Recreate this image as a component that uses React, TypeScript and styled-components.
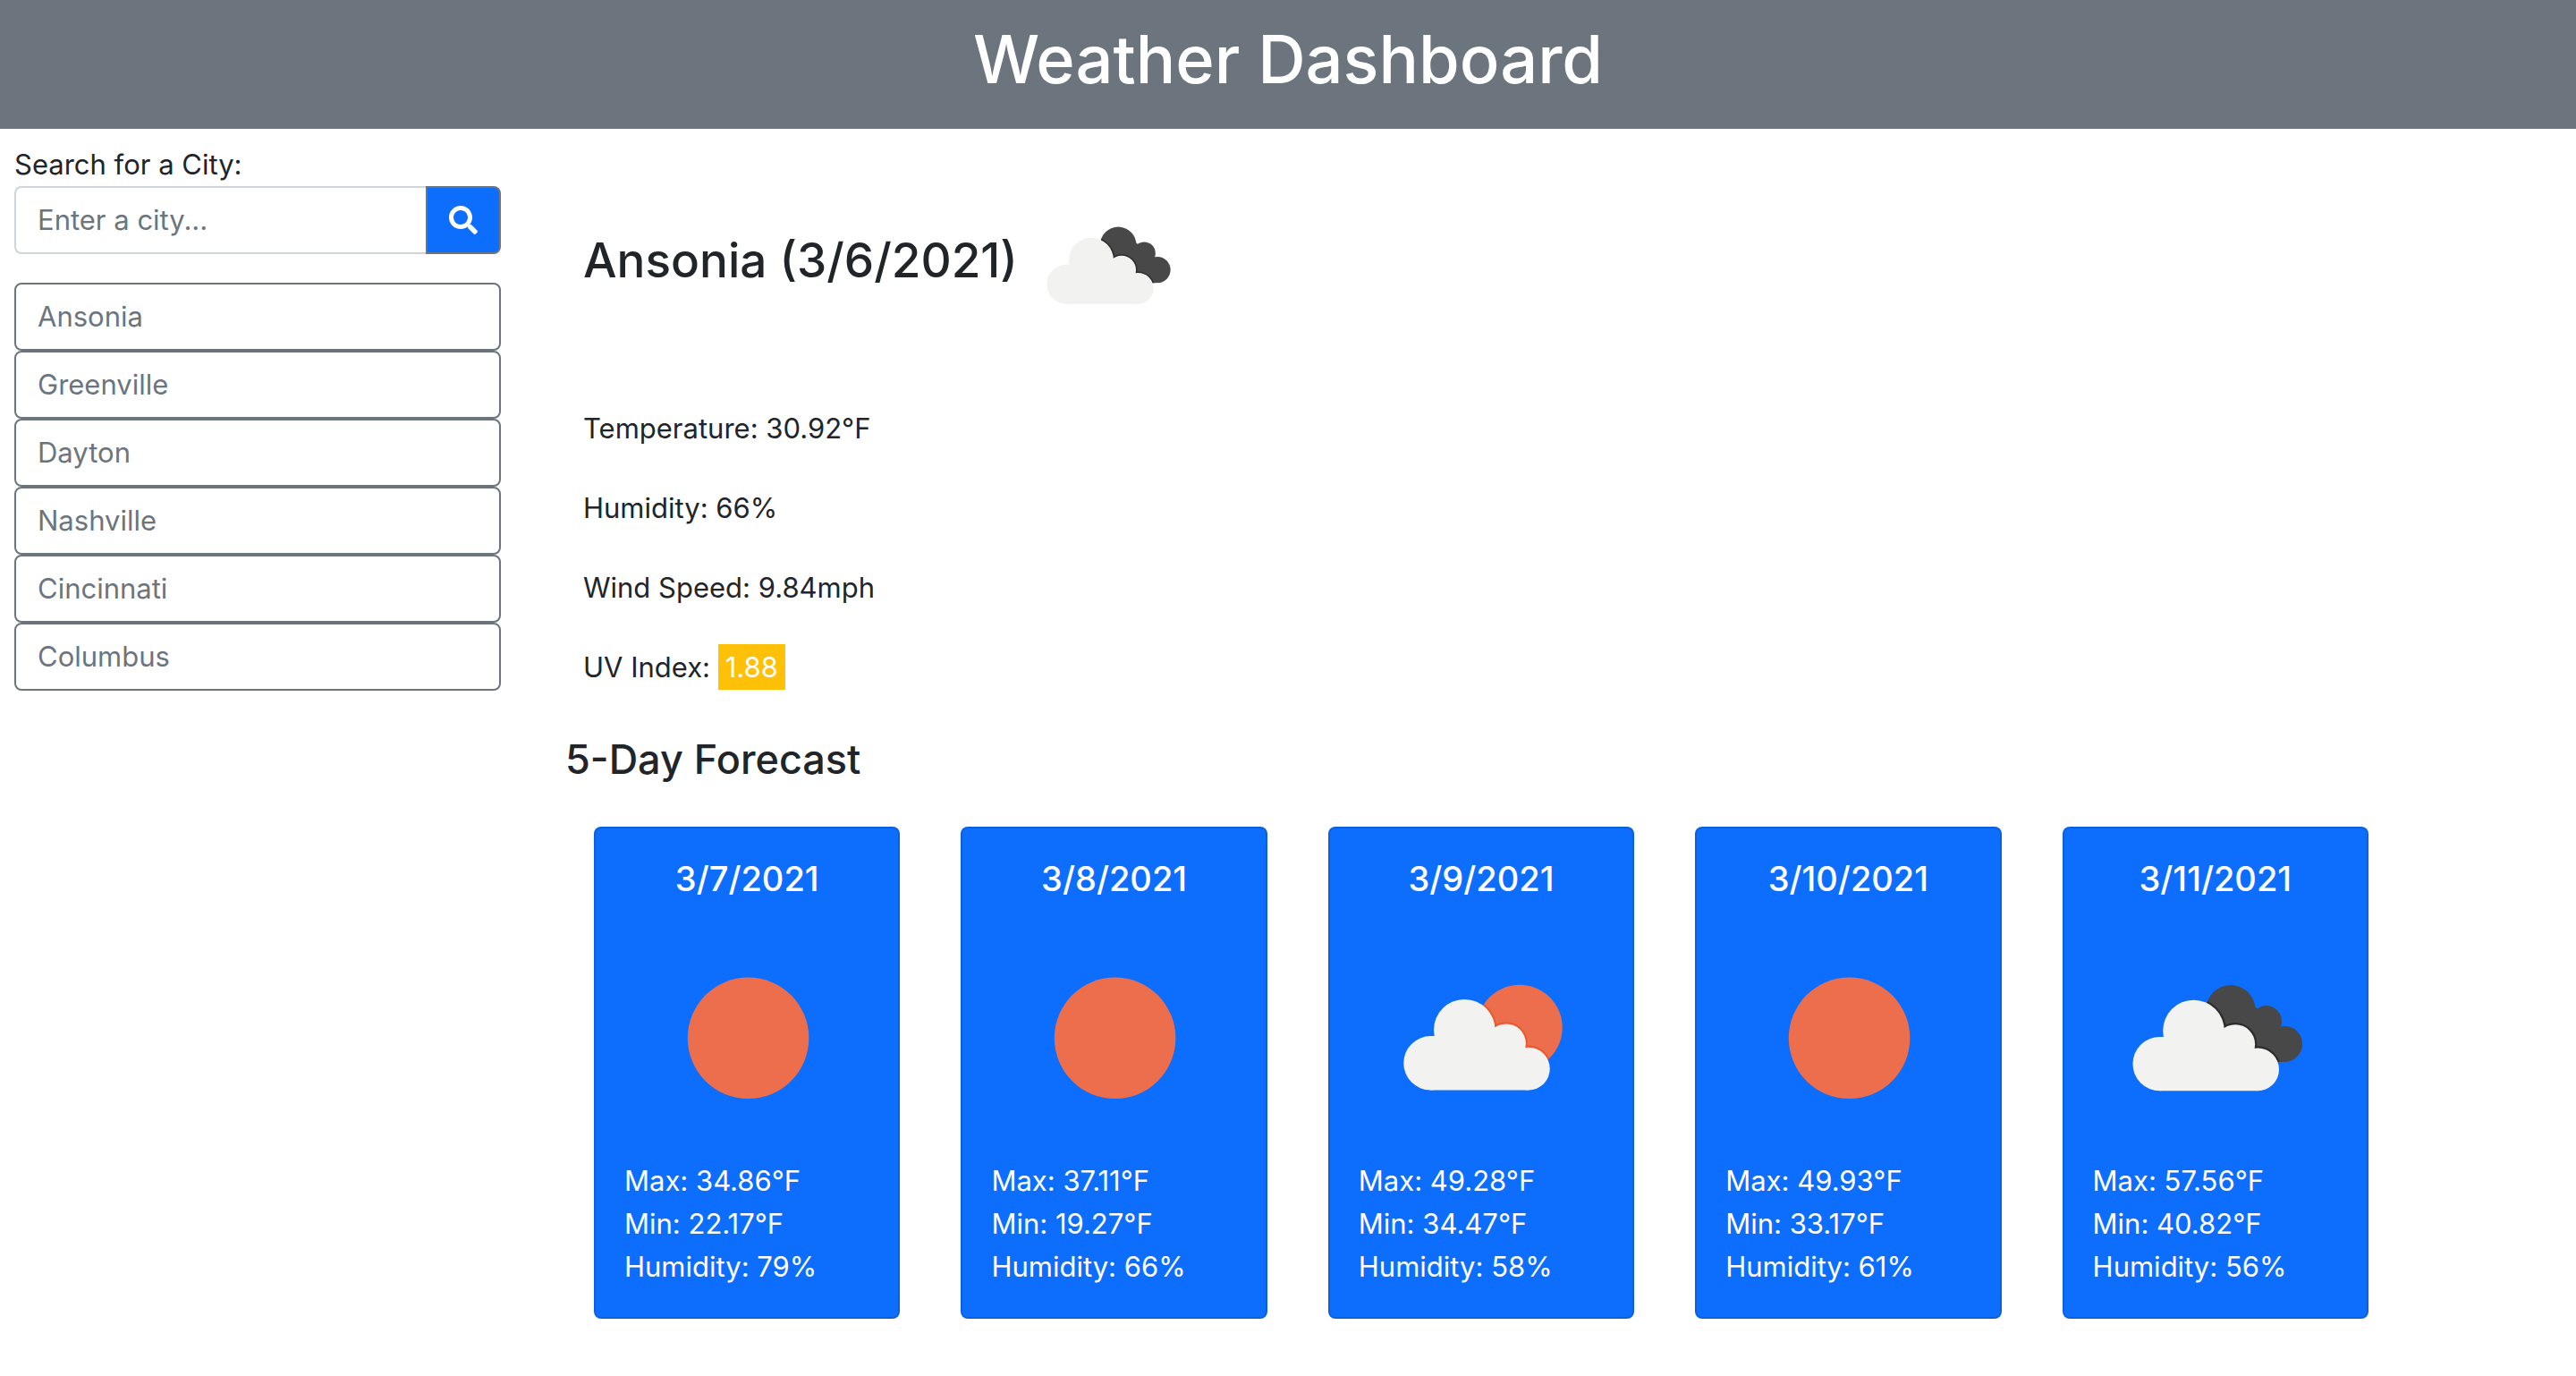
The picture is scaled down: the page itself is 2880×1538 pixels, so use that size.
import React, { useId, useState } from "react";
import styled, { createGlobalStyle } from "styled-components";
import { FaSearch } from "react-icons/fa";

const GlobalStyle = createGlobalStyle`
  *, *::before, *::after { box-sizing: border-box; }
  body {
    margin: 0;
    background: #fff;
    color: #212529;
    font-family: Inter, "Liberation Sans", sans-serif;
    font-size: 31px;
    line-height: 48px;
  }
  h1, h2, h3, h4, p, ul { margin: 0; padding: 0; }
  h1, h2, h3, h4 { font-weight: 500; }
  ul { list-style: none; }
  button, input { font: inherit; margin: 0; }
`;

const Header = styled.header`
  padding: 18px 16px 30px;
  background: #6c757d;
  color: #fff;
  text-align: center;
`;

const Title = styled.h1`
  font-size: 74px;
  line-height: 96px;
`;

const Layout = styled.div`
  display: flex;
  align-items: flex-start;
`;

const Sidebar = styled.aside`
  flex: 0 0 20%;
  min-width: 0;
  padding: 16px;
`;

const SearchForm = styled.form`
  margin-bottom: 32px;
`;

const Label = styled.label`
  display: block;
`;

const InputGroup = styled.div`
  display: flex;
`;

const CityInput = styled.input`
  flex: 1;
  min-width: 0;
  padding: 12px 24px;
  border: 2px solid #ced4da;
  border-right: 0;
  border-radius: 8px 0 0 8px;
  background: #fff;
  color: #212529;
  &::placeholder { color: #6c757d; opacity: 1; }
`;

const SearchButton = styled.button`
  display: flex;
  align-items: center;
  padding: 12px 24px;
  border: 2px solid #6c757d;
  border-radius: 0 8px 8px 0;
  background: #0d6efd;
  color: #fff;
  cursor: pointer;
  svg { width: 32px; height: 32px; }
`;

const CityList = styled.ul`
  display: flex;
  flex-direction: column;
`;

const CityButton = styled.button`
  display: block;
  width: 100%;
  padding: 12px 24px;
  border: 2px solid #6c757d;
  border-radius: 8px;
  background: transparent;
  color: #6c757d;
  text-align: left;
  cursor: pointer;
`;

const Main = styled.main`
  flex: 1;
  min-width: 0;
  padding: 52px 232px 64px 56px;
`;

const Current = styled.section`
  padding: 0 20px;
`;

const CityHeading = styled.h2`
  margin-bottom: 59px;
  font-size: 53px;
  line-height: 67px;
`;

const CurrentIcon = styled.span`
  display: inline-block;
  width: 200px;
  height: 200px;
  vertical-align: middle;
`;

const Readings = styled.ul`
  display: grid;
  gap: 41px;
`;

const UvBadge = styled.span`
  padding: 7px 8px;
  background: #ffc107;
  color: #fff;
`;

const ForecastHeading = styled.h3`
  margin: 50px 0 46px;
  font-size: 45px;
  line-height: 58px;
`;

const ForecastRow = styled.div`
  display: grid;
  grid-template-columns: repeat(5, 1fr);
  gap: 68px;
  padding-left: 32px;
`;

const Card = styled.article`
  padding: 32px;
  border: 2px solid rgba(0, 0, 0, 0.125);
  border-radius: 8px;
  background: #0d6efd;
  color: #fff;
`;

const CardDate = styled.h4`
  margin-bottom: 16px;
  font-size: 38px;
  line-height: 48px;
  text-align: center;
`;

const Picture = styled.svg`
  display: block;
  width: 100%;
  aspect-ratio: 1;
`;

type Sky = "sun" | "sunCloud" | "clouds";

const CloudShape = () => (
  <>
    <circle cx="27.2" cy="60.9" r="11" />
    <circle cx="41" cy="47.4" r="12.5" />
    <circle cx="58" cy="52.9" r="8" />
    <circle cx="67.1" cy="63.2" r="8.7" />
    <path d="M27.2 49.9H53L65.4 54.6L67.1 71.9H27.2z" />
  </>
);

const DarkCloudShape = () => (
  <>
    <circle cx="56.1" cy="38.9" r="10.1" />
    <circle cx="70.6" cy="43.5" r="6.3" />
    <circle cx="78" cy="52.8" r="7.3" />
    <path d="M48 44L64 36L76 46L77 60.1H60z" />
  </>
);

function SkyIcon({ sky }: { sky: Sky }) {
  const clip = useId();
  if (sky === "sun") {
    return (
      <Picture viewBox="0 0 100 100" role="img" aria-label="Clear sky">
        <circle cx="50.5" cy="50.4" r="24.7" fill="#ec6e4c" />
      </Picture>
    );
  }
  const withSun = sky === "sunCloud";
  const back = withSun ? <circle cx="65.6" cy="46.1" r="17.4" /> : <DarkCloudShape />;
  const shift = withSun ? "translate(2.1 -.3)" : undefined;
  return (
    <Picture viewBox="0 0 100 100" role="img" aria-label={withSun ? "Few clouds" : "Broken clouds"}>
      <clipPath id={clip}>{back}</clipPath>
      <g fill={withSun ? "#ec6e4c" : "#484849"}>{back}</g>
      <g clipPath={`url(#${clip})`}>
        <g transform={shift} fill="none" stroke={withSun ? "#ea5a31" : "#2c2c2e"} strokeWidth="1.6">
          <CloudShape />
        </g>
      </g>
      <g transform={shift} fill="#f2f2f0">
        <CloudShape />
      </g>
    </Picture>
  );
}

const cities = ["Ansonia", "Greenville", "Dayton", "Nashville", "Cincinnati", "Columbus"];

const forecast: { date: string; sky: Sky; max: string; min: string; humidity: number }[] = [
  { date: "3/7/2021", sky: "sun", max: "34.86", min: "22.17", humidity: 79 },
  { date: "3/8/2021", sky: "sun", max: "37.11", min: "19.27", humidity: 66 },
  { date: "3/9/2021", sky: "sunCloud", max: "49.28", min: "34.47", humidity: 58 },
  { date: "3/10/2021", sky: "sun", max: "49.93", min: "33.17", humidity: 61 },
  { date: "3/11/2021", sky: "clouds", max: "57.56", min: "40.82", humidity: 56 },
];

export default function App() {
  const [query, setQuery] = useState("");
  return (
    <>
      <GlobalStyle />
      <Header>
        <Title>Weather Dashboard</Title>
      </Header>
      <Layout>
        <Sidebar>
          <SearchForm onSubmit={(e) => e.preventDefault()}>
            <Label htmlFor="city">Search for a City:</Label>
            <InputGroup>
              <CityInput
                id="city"
                type="text"
                placeholder="Enter a city..."
                value={query}
                onChange={(e) => setQuery(e.target.value)}
              />
              <SearchButton type="submit" aria-label="Search">
                <FaSearch />
              </SearchButton>
            </InputGroup>
          </SearchForm>
          <CityList>
            {cities.map((city) => (
              <li key={city}>
                <CityButton type="button">{city}</CityButton>
              </li>
            ))}
          </CityList>
        </Sidebar>
        <Main>
          <Current>
            <CityHeading>
              Ansonia (3/6/2021)
              <CurrentIcon>
                <SkyIcon sky="clouds" />
              </CurrentIcon>
            </CityHeading>
            <Readings>
              <li>Temperature: 30.92°F</li>
              <li>Humidity: 66%</li>
              <li>Wind Speed: 9.84mph</li>
              <li>
                UV Index: <UvBadge>1.88</UvBadge>
              </li>
            </Readings>
          </Current>
          <ForecastHeading>5-Day Forecast</ForecastHeading>
          <ForecastRow>
            {forecast.map((day) => (
              <Card key={day.date}>
                <CardDate>{day.date}</CardDate>
                <SkyIcon sky={day.sky} />
                <p>Max: {day.max}°F</p>
                <p>Min: {day.min}°F</p>
                <p>Humidity: {day.humidity}%</p>
              </Card>
            ))}
          </ForecastRow>
        </Main>
      </Layout>
    </>
  );
}
